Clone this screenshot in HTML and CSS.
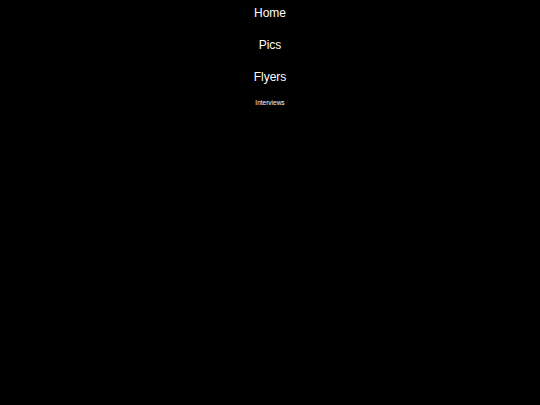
FILE: index.html
```html
<!DOCTYPE html>
<html>
<head>
<meta charset="utf-8">
<link rel="stylesheet" href="styles.css">
</head>
<body>
<nav class="nav">
  <a class="nav-link" href="#">Home</a>
  <a class="nav-link" href="#">Pics</a>
  <a class="nav-link" href="#">Flyers</a>
  <a class="nav-link small" href="#">Interviews</a>
</nav>
</body>
</html>
```
FILE: styles.css
```css
html, body {
  margin: 0;
  padding: 0;
  background: #000;
  height: 100%;
}
.nav {
  display: flex;
  flex-direction: column;
  align-items: center;
  gap: 8px;
  padding-top: 1px;
  font-family: "Liberation Sans", Arial, sans-serif;
}
.nav-link {
  color: #fff;
  text-decoration: none;
  font-size: 12px;
  line-height: 24px;
}
.nav-link.small {
  font-size: 6.5px;
  line-height: 12px;
}
```
